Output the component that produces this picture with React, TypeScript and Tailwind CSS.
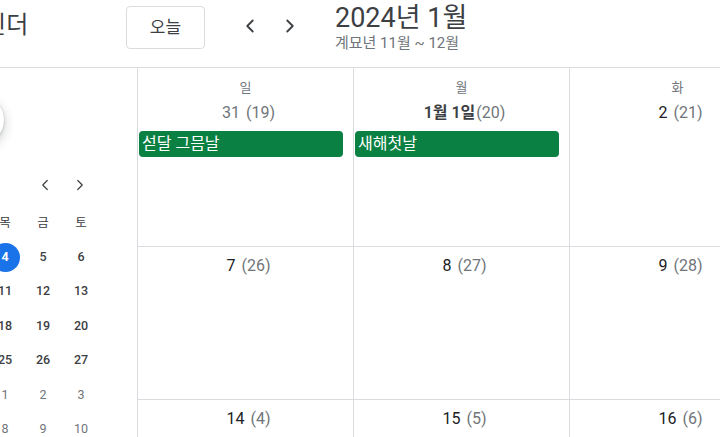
import { ChevronLeft, ChevronRight } from 'lucide-react';

const FONT = "font-['Roboto','Noto_Sans_CJK_KR',sans-serif]";

type Cell = { num: string; lunar: string; muted?: boolean; bold?: boolean; event?: string };

const weeks: Cell[][] = [
  [
    { num: '31', lunar: '(19)', muted: true, event: '섣달 그믐날' },
    { num: '1월 1일', lunar: '(20)', bold: true, event: '새해첫날' },
    { num: '2', lunar: '(21)' },
  ],
  [
    { num: '7', lunar: '(26)' },
    { num: '8', lunar: '(27)' },
    { num: '9', lunar: '(28)' },
  ],
  [
    { num: '14', lunar: '(4)' },
    { num: '15', lunar: '(5)' },
    { num: '16', lunar: '(6)' },
  ],
];

const dayNames = ['일', '월', '화'];

const miniWeekdays = ['일', '월', '화', '수', '목', '금', '토'];
const miniRows: { d: number; out?: boolean }[][] = [
  [{ d: 31, out: true }, { d: 1 }, { d: 2 }, { d: 3 }, { d: 4 }, { d: 5 }, { d: 6 }],
  [{ d: 7 }, { d: 8 }, { d: 9 }, { d: 10 }, { d: 11 }, { d: 12 }, { d: 13 }],
  [{ d: 14 }, { d: 15 }, { d: 16 }, { d: 17 }, { d: 18 }, { d: 19 }, { d: 20 }],
  [{ d: 21 }, { d: 22 }, { d: 23 }, { d: 24 }, { d: 25 }, { d: 26 }, { d: 27 }],
  [{ d: 28 }, { d: 29 }, { d: 30 }, { d: 31 }, { d: 1, out: true }, { d: 2, out: true }, { d: 3, out: true }],
  [{ d: 4, out: true }, { d: 5, out: true }, { d: 6, out: true }, { d: 7, out: true }, { d: 8, out: true }, { d: 9, out: true }, { d: 10, out: true }],
];

const MiniCalendar = () => (
  <div className="ml-[-166px] w-[266px] pt-[100px]">
    {/* month header */}
    <div className="flex h-[34px] items-center justify-between pr-[3px]">
      <span className="text-[14px] text-[#3c4043]">2024년 1월</span>
      <div className="flex">
        <span className="flex w-[35px] justify-center text-[#3c4043]">
          <ChevronLeft size={18} strokeWidth={1.6} />
        </span>
        <span className="flex w-[35px] justify-center text-[#3c4043]">
          <ChevronRight size={18} strokeWidth={1.6} />
        </span>
      </div>
    </div>

    <div className="mt-[4px] grid h-[34px] grid-cols-7 items-center">
      {miniWeekdays.map((w) => (
        <span key={w} className="text-center text-[12.5px] text-[#3c4043]">
          {w}
        </span>
      ))}
    </div>

    {miniRows.map((row, i) => (
      <div key={i} className="grid h-[34.5px] grid-cols-7 items-center">
        {row.map((c, j) => {
          const today = i === 0 && c.d === 4 && !c.out;
          return (
            <div key={j} className="flex justify-center">
              {today ? (
                <span className="flex h-[29px] w-[29px] items-center justify-center rounded-full bg-[#1a73e8] text-[12.5px] font-bold text-white">
                  {c.d}
                </span>
              ) : (
                <span
                  className={`text-[12.5px] ${
                    c.out ? 'text-[#70757a]' : 'font-medium text-[#3c4043]'
                  }`}
                >
                  {c.d}
                </span>
              )}
            </div>
          );
        })}
      </div>
    ))}
  </div>
);

export default function App() {
  return (
    <div className={`flex h-[437px] w-[720px] flex-col overflow-hidden bg-white ${FONT}`}>
      {/* Header */}
      <header className="flex h-[68px] shrink-0 items-start border-b border-[#dadce0]">
        <div className="w-[126px] shrink-0 overflow-hidden">
          <span className="ml-[-38px] mt-[10px] block whitespace-nowrap text-[24px] leading-[30px] text-[#3c4043]">
            캘린더
          </span>
        </div>

        <button className="mt-[6px] flex h-[43px] w-[79px] shrink-0 items-center justify-center rounded-[4px] border border-[#dadce0] text-[17px] text-[#3c4043]">
          오늘
        </button>

        <div className="ml-[25px] mt-[6px] flex">
          <span className="flex h-[40px] w-[40px] items-center justify-center text-[#3c4043]">
            <ChevronLeft size={22} strokeWidth={2} />
          </span>
          <span className="flex h-[40px] w-[40px] items-center justify-center text-[#3c4043]">
            <ChevronRight size={22} strokeWidth={2} />
          </span>
        </div>

        <div className="ml-[25px] mt-[1px] flex flex-col">
          <span className="text-[27px] leading-[34px] text-[#3c4043]">2024년 1월</span>
          <span className="text-[15px] leading-[16px] text-[#70757a]">계묘년 11월 ~ 12월</span>
        </div>
      </header>

      {/* Body */}
      <div className="flex min-h-0 flex-1">
        <aside className="relative w-[137px] shrink-0 overflow-hidden">
          {/* create button edge */}
          <div className="absolute left-[-120px] top-[28px] h-[48px] w-[124px] rounded-full bg-white shadow-[0_1px_3px_rgba(60,64,67,0.3),0_4px_8px_3px_rgba(60,64,67,0.15)]" />
          <MiniCalendar />
        </aside>

        <div className="flex min-w-0 flex-1 flex-col border-l border-[#dadce0]">
          {weeks.map((week, wi) => (
            <div
              key={wi}
              className={`grid shrink-0 grid-cols-[216px_216px_216px] border-b border-[#dadce0] ${
                wi === 0 ? 'h-[179px]' : 'h-[153px]'
              }`}
            >
              {week.map((cell, ci) => (
                <div key={ci} className="flex flex-col border-r border-[#dadce0]">
                  {wi === 0 && (
                    <span className="pt-[12px] text-center text-[13px] leading-[16px] text-[#70757a]">
                      {dayNames[ci]}
                    </span>
                  )}
                  <div
                    className={`flex justify-center pl-[6px] text-[16px] leading-[20px] ${
                      wi === 0 ? 'mt-[7px]' : 'mt-[9px]'
                    }`}
                  >
                    <span
                      className={
                        cell.muted
                          ? 'text-[#70757a]'
                          : cell.bold
                            ? 'font-semibold text-[#3c4043]'
                            : 'text-[#202124]'
                      }
                    >
                      {cell.num}
                    </span>
                    <span className={`${cell.bold ? 'ml-[1px]' : 'ml-[6px]'} text-[#70757a]`}>
                      {cell.lunar}
                    </span>
                  </div>
                  {cell.event && (
                    <div className="ml-[1px] mr-[10px] mt-[8px] h-[26px] truncate rounded-[4px] bg-[#0b8043] pl-[3px] text-[16px] leading-[26px] text-white">
                      {cell.event}
                    </div>
                  )}
                </div>
              ))}
            </div>
          ))}
        </div>
      </div>
    </div>
  );
}
